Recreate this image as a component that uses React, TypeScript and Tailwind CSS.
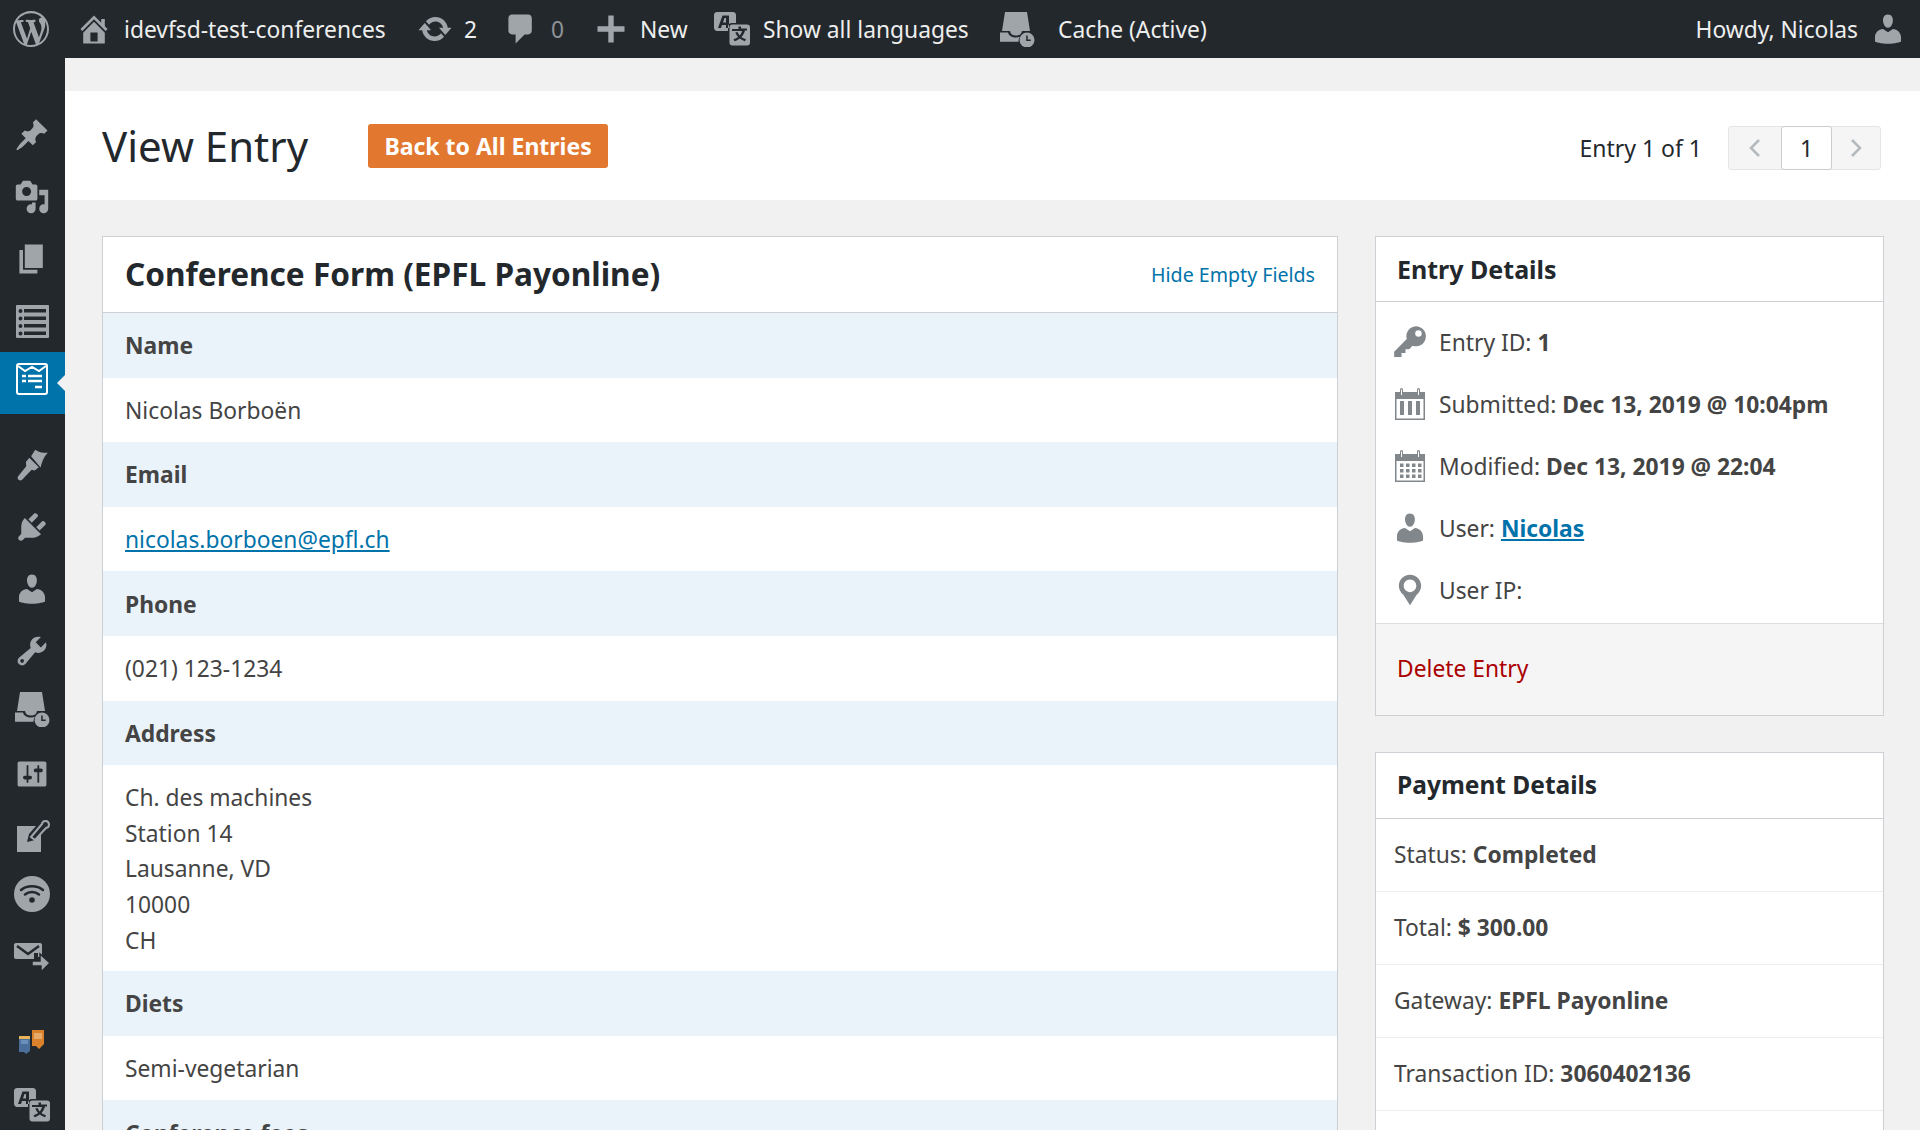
import type { ReactNode } from "react";

const paths = {
  wp: "M20 10c0-5.51-4.49-10-10-10C4.48 0 0 4.49 0 10c0 5.52 4.48 10 10 10 5.51 0 10-4.48 10-10zM7.78 15.37L4.37 6.22c.55-.02 1.17-.08 1.17-.08.5-.06.44-1.13-.06-1.11 0 0-1.45.11-2.37.11-.18 0-.37 0-.58-.01C4.12 2.82 6.89 1.26 10 1.26c2.32 0 4.43.87 6.02 2.32-.67-.11-1.63.39-1.63 1.53 0 .71.43 1.31.87 2.02.35.61.55 1.36.55 2.46 0 1.49-1.4 5-1.4 5l-3.03-8.35c.54-.02.82-.17.82-.17.5-.05.44-1.25-.06-1.22 0 0-1.44.12-2.38.12-.87 0-2.33-.12-2.33-.12-.5-.03-.56 1.2-.06 1.22l.92.08 1.26 3.41zM17.41 10c.24-.64.74-1.87.43-4.25.7 1.29 1.05 2.71 1.05 4.25 0 3.29-1.73 6.24-4.4 7.78.97-2.59 1.94-5.2 2.92-7.78zM6.1 18.09C3.12 16.65 1.11 13.53 1.11 10c0-1.3.23-2.48.72-3.59C3.25 10.3 4.67 14.2 6.1 18.09zm4.03-6.63l2.58 6.98c-.87.29-1.76.45-2.71.45-.79 0-1.57-.11-2.29-.33.81-2.38 1.62-4.74 2.42-7.1z",
  home: "M16 8.5l1.53 1.53-1.06 1.06L10 4.62l-6.47 6.47-1.06-1.06L10 2.5l4 4v-2h2v4zm-6-2.46l6 5.99V18H4v-5.97zM12 17v-5H8v5h4z",
  update: "M10.2 3.28c3.53 0 6.43 2.61 6.92 6h2.08l-3.5 4-3.5-4h2.32c-.45-1.97-2.21-3.45-4.32-3.45-1.45 0-2.73.71-3.54 1.78L4.95 5.66C6.23 4.2 8.11 3.28 10.2 3.28zm-.4 13.44c-3.52 0-6.43-2.61-6.92-6H.8l3.5-4c1.17 1.33 2.33 2.67 3.5 4H5.48c.45 1.97 2.21 3.45 4.32 3.45 1.45 0 2.73-.71 3.54-1.78l1.71 1.95c-1.28 1.46-3.15 2.38-5.25 2.38z",
  comment: "M5 2h9c1.1 0 2 .9 2 2v7c0 1.1-.9 2-2 2h-2l-5 5v-5H5c-1.1 0-2-.9-2-2V4c0-1.1.9-2 2-2z",
  plus: "M17.5 8.5v3h-6v6h-3v-6h-6v-3h6v-6h3v6h6z",
  pin: "M10.44 3.02l1.82-1.82 6.36 6.35-1.83 1.82c-1.05-.68-2.48-.57-3.41.36l-.75.75c-.92.93-1.04 2.35-.35 3.41l-1.83 1.82-2.41-2.41-2.8 2.79c-.42.42-3.38 2.71-3.8 2.29s1.86-3.39 2.28-3.81l2.79-2.79L4.1 9.36l1.83-1.82c1.05.69 2.48.57 3.4-.36l.75-.75c.93-.92 1.05-2.35.36-3.41z",
  media: "M13 11V4c0-.55-.45-1-1-1h-1.67L9 1H5L3.67 3H2c-.55 0-1 .45-1 1v7c0 .55.45 1 1 1h10c.55 0 1-.45 1-1zM7 4.5c1.38 0 2.5 1.12 2.5 2.5S8.38 9.5 7 9.5 4.5 8.38 4.5 7 5.62 4.5 7 4.5zM14 6h5v10.5c0 1.38-1.12 2.5-2.5 2.5S14 17.88 14 16.5s1.12-2.5 2.5-2.5c.17 0 .34.02.5.05V9h-3V6zm-4 8.05V13h2v3.5c0 1.38-1.12 2.5-2.5 2.5S7 17.88 7 16.5 8.12 14 9.5 14c.17 0 .34.02.5.05z",
  page: "M6 15V2h10v13H6zm-1 1h8v2H3V5h2v11z",
  plugin: "M13.11 4.36L9.87 7.6 8 5.73l3.24-3.24c.35-.34 1.05-.2 1.56.32.52.51.66 1.21.31 1.55zm-8 1.77l.91-1.12 9.01 9.01-1.19.84c-.71.71-2.63 1.16-3.82 1.16H6.14L4.9 17.26c-.59.59-1.54.59-2.12 0-.59-.58-.59-1.53 0-2.12l1.24-1.24v-3.88c0-1.13.4-3.19 1.09-3.89zm7.26 3.97l3.24-3.24c.34-.35 1.04-.21 1.55.31.52.51.66 1.21.31 1.55l-3.24 3.25z",
  user: "M10 9.25c-2.27 0-2.73-3.44-2.73-3.44C7 4.02 7.82 2 9.97 2c2.16 0 2.98 2.02 2.71 3.81 0 0-.41 3.44-2.68 3.44zm0 2.57L12.72 10c2.39 0 4.52 2.33 4.52 4.53v2.49s-3.65 1.13-7.24 1.13c-3.65 0-7.24-1.13-7.24-1.13v-2.49c0-2.25 1.94-4.48 4.47-4.48z",
  tools: "M16.68 9.77c-1.34 1.34-3.3 1.67-4.95.99l-5.41 6.52c-.99.99-2.59.99-3.58 0s-.99-2.59 0-3.57l6.52-5.42c-.68-1.65-.35-3.61.99-4.95 1.28-1.28 3.12-1.62 4.72-1.06l-2.89 2.89 2.82 2.82 2.86-2.87c.53 1.58.18 3.39-1.08 4.65zM3.81 16.21c.4.39 1.04.39 1.43 0 .4-.4.4-1.04 0-1.43-.39-.4-1.03-.4-1.43 0-.39.39-.39 1.03 0 1.43z",
  sliders: "M18 16V4c0-.55-.45-1-1-1H3c-.55 0-1 .45-1 1v12c0 .55.45 1 1 1h14c.55 0 1-.45 1-1zM8 11h1c.55 0 1 .45 1 1s-.45 1-1 1H8v1.5c0 .28-.22.5-.5.5s-.5-.22-.5-.5V13H6c-.55 0-1-.45-1-1s.45-1 1-1h1V5.5c0-.28.22-.5.5-.5s.5.22.5.5V11zm5-2h-1c-.55 0-1-.45-1-1s.45-1 1-1h1V5.5c0-.28.22-.5.5-.5s.5.22.5.5V7h1c.55 0 1 .45 1 1s-.45 1-1 1h-1v5.5c0 .28-.22.5-.5.5s-.5-.22-.5-.5V9z",
  key: "M13.200 1.200a5.600 5.600 0 1 1-1.800 10.900L9.600 14H7.500v2.100H5.300v2.200H1.200v-2.900l7-7a5.600 5.600 0 0 1 5-7.200zm1.500 2.300a1.800 1.800 0 1 0 0 3.600 1.800 1.800 0 0 0 0-3.600z",
  location: "M10 1.500C6.400 1.500 3.800 4.300 3.800 7.700c0 2 1 3.800 2.500 5L10 18.500l3.700-5.800c1.500-1.200 2.500-3 2.500-5 0-3.400-2.600-6.200-6.200-6.200zm0 9.700c-1.900 0-3.500-1.600-3.500-3.500s1.600-3.500 3.500-3.500 3.500 1.600 3.500 3.500-1.600 3.500-3.500 3.500z",
};

function Dash({ d, className = "fill-[#a0a5aa]" }: { d: string; className?: string }) {
  return (
    <svg viewBox="0 0 20 20" className={`w-9 h-9 shrink-0 ${className}`}>
      <path d={d} fillRule="evenodd" />
    </svg>
  );
}

function Cache() {
  return (
    <svg viewBox="0 0 36 36" className="w-9 h-9 shrink-0 fill-[#a0a5aa]">
      <path d="M6 1h22l3 19h-8c-.5 3-2.500 4.500-6 4.500S11.500 23 11 20H3z" />
      <path d="M1 21.500h8c.8 3.500 4 5 8 5 1.500 0 3-.2 4-.8-1 1.500-1.500 3-1.500 5H1z" />
      <circle cx="28" cy="29" r="7.500" />
      <path d="M27.200 24.500h1.500v4h3v1.500h-4.500z" fill="#23282d" />
    </svg>
  );
}

function Translate() {
  return (
    <svg viewBox="0 0 36 36" className="w-9 h-9 shrink-0">
      <path fillRule="evenodd" fill="#a0a5aa" d="M3 1h16c1.500 0 3 1.200 3 3v8h-4c-2.500 0-4 1.500-4 4v4H3c-1.500 0-3-1.500-3-3V4c0-1.800 1.500-3 3-3zm5.500 3.500L4 17h3l1-3h4v3h3V4.500zM12 7v4.500H9L10.500 7z" />
      <rect x="15.500" y="13.500" width="20.500" height="21" rx="3" fill="#a0a5aa" />
      <path d="M24.500 15.500h2.500v2h6v2h-2c-.8 3-2 5-3.500 6.500 1.200.9 2.600 1.600 4.500 2.200l-1 2c-2.100-.7-3.800-1.600-5.200-2.800-1.400 1.200-3.100 2.100-5.300 2.800l-1-2c1.900-.6 3.400-1.300 4.600-2.200-1.200-1.300-2.100-2.800-2.800-4.500l2.200-.5c.5 1.300 1.200 2.400 2.200 3.400 1-1.100 1.800-2.400 2.300-4.400H18v-2h6.500z" fill="#23282d" />
    </svg>
  );
}

function ListIcon() {
  return (
    <svg viewBox="0 0 33 33" className="w-[33px] h-[33px] shrink-0 fill-[#a0a5aa]">
      <path fillRule="evenodd" d="M1 0h31a1 1 0 0 1 1 1v31a1 1 0 0 1-1 1H1a1 1 0 0 1-1-1V1a1 1 0 0 1 1-1zM8 4v3.500h22V4zm0 7.500V15h22v-3.500zM8 19v3.500h22V19zm0 7.500V30h22v-3.500zM4.500 4a2 2 0 1 0 0 4 2 2 0 0 0 0-4zm0 7.500a2 2 0 1 0 0 4 2 2 0 0 0 0-4zm0 7.500a2 2 0 1 0 0 4 2 2 0 0 0 0-4zm0 7.500a2 2 0 1 0 0 4 2 2 0 0 0 0-4z" />
    </svg>
  );
}

function FormIcon() {
  return (
    <svg viewBox="0 0 32 32" className="w-8 h-8 shrink-0 -translate-y-1 fill-none stroke-white">
      <rect x="1" y="1" width="30" height="30" rx="2" strokeWidth="2" />
      <path d="M2 3l7 5 7-4 7 4 7-5" strokeWidth="2" />
      <path d="M6 13h4M12 13h14M6 18h4M12 18h14M19 24h7" strokeWidth="2.500" />
    </svg>
  );
}

function EditIcon() {
  return (
    <svg viewBox="0 0 36 36" className="w-9 h-9 shrink-0 fill-[#a0a5aa]">
      <path d="M3 7h19l-7 8-2 8 8-2 6-6v18H3z" />
      <path d="M17 18l11-13a3.500 3.500 0 1 1 4 4L21 21z" fillOpacity="0" stroke="#a0a5aa" strokeWidth="2" />
    </svg>
  );
}

function Wifi() {
  return (
    <svg viewBox="0 0 36 36" className="w-9 h-9 shrink-0 -translate-y-[5px]">
      <circle cx="18" cy="18" r="18" fill="#a0a5aa" />
      <g fill="none" stroke="#23282d" strokeWidth="2.500" strokeLinecap="round">
        <path d="M7 14c6-5 16-5 22 0" />
        <path d="M11 18.500c4-3.200 10-3.200 14 0" />
      </g>
      <circle cx="18" cy="24" r="2.800" fill="#23282d" />
    </svg>
  );
}

function MailIcon() {
  return (
    <svg viewBox="0 0 36 30" className="w-9 h-[30px] shrink-0 -translate-y-[3px] fill-[#a0a5aa]">
      <path d="M2 0h24c1.500 0 2 1 2 2v12h-4v-4h-4v6H2c-1.500 0-2-1-2-2V2C0 1 .5 0 2 0z" />
      <path d="M3 3l11 8 11-8" fill="none" stroke="#23282d" strokeWidth="2.500" />
      <path d="M18 18h8v-7l10 9-9 9v-6h-9z" stroke="#23282d" strokeWidth="1.500" />
    </svg>
  );
}

function Gauge() {
  return (
    <svg viewBox="0 0 20 20" className="w-9 h-9 shrink-0 fill-[#a0a5aa]">
      <path fillRule="evenodd" d="M3.500 8h13l1 5c0 2-.5 3-2 3h-11c-1.500 0-2-1-2-3zM10 12a1.500 1.500 0 1 0 0 3 1.500 1.500 0 0 0 0-3z" />
    </svg>
  );
}

function Polylang() {
  return (
    <svg viewBox="0 0 28 28" className="w-7 h-7 shrink-0">
      <path d="M1 7h11v15l-4 3-2-2H1z" fill="#4a6f9c" />
      <path d="M1 7h11v3H1z" fill="#e8b45a" />
      <path d="M14 1h12v14l-5 5-3-3h-4z" fill="#d9822b" />
      <path d="M16 4h8v6h-8z" fill="#e6ab6a" />
      <path d="M3 11h7v4H3z" fill="#6a8fb8" />
    </svg>
  );
}

function CalendarIcon({ dots }: { dots?: boolean }) {
  return (
    <svg viewBox="0 0 30 32" className="w-[30px] h-8 fill-[#82878c]">
      <path fillRule="evenodd" d="M0 4h5V1.500a1.500 1.500 0 0 1 3 0V4h14V1.500a1.500 1.500 0 0 1 3 0V4h5v28H0zm1.500 7v19.500h27V11z" />
      <path d="M6 1.500v5.500h1V1.500zM23 1.500v5.500h1V1.500z" fill="#fff" />
      {dots ? (
        <>
          {[13.5, 19, 24.5].map((y) =>
            [5, 11, 17, 23].map((x) => <rect key={`${x}-${y}`} x={x} y={y} width="3.500" height="3.500" />),
          )}
        </>
      ) : (
        <>
          <rect x="5" y="13" width="4" height="14" />
          <rect x="13" y="13" width="4" height="14" />
          <rect x="21" y="13" width="4" height="14" />
        </>
      )}
    </svg>
  );
}

function SideItem({ children, active }: { children: ReactNode; active?: boolean }) {
  return (
    <div className={`relative h-[62px] shrink-0 flex items-center justify-center pr-px ${active ? "bg-[#0073aa]" : ""}`}>
      {children}
      {active && (
        <span className="absolute right-0 top-[23px] w-0 h-0 border-y-[8px] border-r-[8px] border-y-transparent border-r-[#f1f1f1]" />
      )}
    </div>
  );
}

function BarItem({ icon, label, className }: { icon: ReactNode; label: string; className: string }) {
  return (
    <div className={`flex items-center shrink-0 h-full whitespace-nowrap ${className}`}>
      {icon}
      <span className="pt-[2px]">{label}</span>
    </div>
  );
}

function FieldLabel({ children }: { children: ReactNode }) {
  return <div className="h-[64.6px] flex items-center px-[22px] pt-[2px] bg-[#eaf2fa] font-bold text-[#444]">{children}</div>;
}

function FieldValue({ children }: { children: ReactNode }) {
  return <div className="h-[64.6px] flex items-center px-[22px] pt-[2px] text-[#444]">{children}</div>;
}

function EntryRow({ icon, children }: { icon: ReactNode; children: ReactNode }) {
  return (
    <div className="h-[62px] flex items-center">
      <div className="w-9 flex justify-center shrink-0">{icon}</div>
      <div className="ml-[11px] pt-[2px] whitespace-nowrap">{children}</div>
    </div>
  );
}

function PayRow({ label, value }: { label: string; value: string }) {
  return (
    <div className="h-[73px] flex items-center pl-[18px] border-b border-[#eeeeee]">
      {label}&nbsp;<b>{value}</b>
    </div>
  );
}

export default function App() {
  return (
    <div className="w-full h-[1130px] overflow-hidden flex flex-col bg-[#f1f1f1] text-[22.8px] text-[#444] font-['Noto_Sans',sans-serif]">
      <header className="relative z-10 h-[58px] shrink-0 bg-[#23282d] text-[#eeeeee] flex items-center">
        <div className="w-[62px] h-full flex items-center justify-center shrink-0">
          <Dash d={paths.wp} />
        </div>
        <BarItem className="w-[355px] pl-[14px] gap-3" icon={<Dash d={paths.home} />} label="idevfsd-test-conferences" />
        <BarItem className="w-[86px] gap-[11px]" icon={<Dash d={paths.update} />} label="2" />
        <BarItem className="w-[90px] gap-3 text-[#8f9396]" icon={<Dash d={paths.comment} />} label="0" />
        <BarItem className="w-[121px] gap-[11px]" icon={<Dash d={paths.plus} />} label="New" />
        <BarItem className="w-[285px] gap-[13px]" icon={<Translate />} label="Show all languages" />
        <BarItem className="gap-[23px]" icon={<Cache />} label="Cache (Active)" />
        <div className="ml-auto flex items-center gap-3 pr-[14px]">
          <span className="pt-[2px]">Howdy, Nicolas</span>
          <Dash d={paths.user} />
        </div>
      </header>

      <div className="flex-1 flex min-h-0">
        <aside className="w-[65px] shrink-0 bg-[#23282d] overflow-hidden flex flex-col">
          <div className="-mt-[46px]" />
          <SideItem>
            <Gauge />
          </SideItem>
          <div className="h-[30px] shrink-0" />
          <SideItem>
            <Dash d={paths.pin} />
          </SideItem>
          <SideItem>
            <Dash d={paths.media} />
          </SideItem>
          <SideItem>
            <Dash d={paths.page} />
          </SideItem>
          <SideItem>
            <ListIcon />
          </SideItem>
          <SideItem active>
            <FormIcon />
          </SideItem>
          <div className="h-5 shrink-0" />
          <SideItem>
            <svg viewBox="0 0 20 20" className="w-9 h-9 shrink-0 fill-[#a0a5aa]">
              <path d="M9.500 5.200L11.800 1.500c2 1.400 4.300 1.800 7 1.700-1.700 1.800-3 4-4 8.200z" />
              <path d="M8.500 6l5.300 5.300-2.300 1.700-1.700-.4-5.300 5.600c-1.300 1-3-.3-2.300-1.800l4.600-5.700-.2-2.300z" />
            </svg>
          </SideItem>
          <SideItem>
            <Dash d={paths.plugin} />
          </SideItem>
          <SideItem>
            <Dash d={paths.user} />
          </SideItem>
          <SideItem>
            <Dash d={paths.tools} />
          </SideItem>
          <SideItem>
            <div className="-translate-y-1">
              <Cache />
            </div>
          </SideItem>
          <SideItem>
            <div className="-translate-y-px">
              <Dash d={paths.sliders} />
            </div>
          </SideItem>
          <SideItem>
            <EditIcon />
          </SideItem>
          <SideItem>
            <Wifi />
          </SideItem>
          <SideItem>
            <MailIcon />
          </SideItem>
          <div className="h-5 shrink-0" />
          <SideItem>
            <Polylang />
          </SideItem>
          <SideItem>
            <Translate />
          </SideItem>
        </aside>

        <main className="flex-1 min-w-0 pt-[33px]">
          <div className="h-[109px] bg-white flex items-center pl-[37px] pr-[39px]">
            <h1 className="text-[42px] text-[#23282d] whitespace-nowrap">View Entry</h1>
            <a className="ml-[60px] h-11 w-[240px] pt-[2px] flex items-center justify-center rounded-[3px] bg-[#e27730] text-white font-bold text-[23px]">
              Back to All Entries
            </a>
            <div className="ml-auto mt-[5px] text-[#23282d] text-[23px] whitespace-nowrap">Entry 1 of 1</div>
            <div className="ml-[26px] mt-[5px] flex h-11 w-[153px] rounded-[3px] border border-[#e5e5e5] bg-[#f5f5f5] text-[#b4b9be]">
              <div className="w-[52px] flex items-center justify-center">
                <svg viewBox="0 0 12 20" className="w-3 h-5 fill-none stroke-current stroke-[2.500]">
                  <path d="M10 2l-8 8 8 8" />
                </svg>
              </div>
              <div className="w-[51px] -my-px flex items-center justify-center bg-white border border-[#ccc] rounded-[3px] text-[#23282d] text-[23px]">
                1
              </div>
              <div className="flex-1 flex items-center justify-center">
                <svg viewBox="0 0 12 20" className="w-3 h-5 fill-none stroke-current stroke-[2.500]">
                  <path d="M2 2l8 8-8 8" />
                </svg>
              </div>
            </div>
          </div>

          <div className="flex items-start gap-[37px] pt-9 pl-[37px] pr-9">
            <section className="flex-1 min-w-0 bg-white border border-[#ccd0d4]">
              <div className="h-[76px] flex items-center justify-between px-[22px] border-b border-[#ccd0d4]">
                <h2 className="-mt-[2px] text-[31.6px] font-bold text-[#23282d] whitespace-nowrap">Conference Form (EPFL Payonline)</h2>
                <a className="text-[#0073aa] text-[19.6px]">Hide Empty Fields</a>
              </div>
              <FieldLabel>Name</FieldLabel>
              <FieldValue>Nicolas Borboën</FieldValue>
              <FieldLabel>Email</FieldLabel>
              <FieldValue>
                <a className="text-[#0073aa] underline">nicolas.borboen@epfl.ch</a>
              </FieldValue>
              <FieldLabel>Phone</FieldLabel>
              <FieldValue>(021) 123-1234</FieldValue>
              <FieldLabel>Address</FieldLabel>
              <div className="pt-[15px] pb-[13px] px-[22px] leading-[35.6px] text-[#444]">
                Ch. des machines
                <br />
                Station 14
                <br />
                Lausanne, VD
                <br />
                10000
                <br />
                CH
              </div>
              <FieldLabel>Diets</FieldLabel>
              <FieldValue>Semi-vegetarian</FieldValue>
              <FieldLabel>Conference fees</FieldLabel>
            </section>

            <div className="w-[509px] shrink-0 flex flex-col gap-9">
              <section className="bg-white border border-[#ccd0d4]">
                <h3 className="h-[65px] pt-[2px] flex items-center pl-[21px] border-b border-[#ccd0d4] text-[25px] font-bold text-[#23282d]">
                  Entry Details
                </h3>
                <div className="pt-[9px] pb-[2px] pl-4">
                  <EntryRow icon={<Dash d={paths.key} className="fill-[#82878c]" />}>
                    Entry ID: <b>1</b>
                  </EntryRow>
                  <EntryRow icon={<CalendarIcon />}>
                    Submitted: <b>Dec 13, 2019 @ 10:04pm</b>
                  </EntryRow>
                  <EntryRow icon={<CalendarIcon dots />}>
                    Modified: <b>Dec 13, 2019 @ 22:04</b>
                  </EntryRow>
                  <EntryRow icon={<Dash d={paths.user} className="fill-[#82878c]" />}>
                    User:{" "}
                    <a className="text-[#0073aa] font-bold underline">Nicolas</a>
                  </EntryRow>
                  <EntryRow icon={<Dash d={paths.location} className="fill-[#82878c]" />}>User IP:</EntryRow>
                </div>
                <div className="h-[92px] flex items-center pl-[21px] bg-[#f5f5f5] border-t border-[#ddd] text-[#a00]">Delete Entry</div>
              </section>

              <section className="bg-white border border-[#ccd0d4]">
                <h3 className="h-[66px] flex items-center pl-[21px] border-b border-[#ccd0d4] text-[24.5px] font-bold text-[#23282d]">
                  Payment Details
                </h3>
                <PayRow label="Status:" value="Completed" />
                <PayRow label="Total:" value="$ 300.00" />
                <PayRow label="Gateway:" value="EPFL Payonline" />
                <PayRow label="Transaction ID:" value="3060402136" />
                <div className="h-[73px]" />
              </section>
            </div>
          </div>
        </main>
      </div>
    </div>
  );
}
